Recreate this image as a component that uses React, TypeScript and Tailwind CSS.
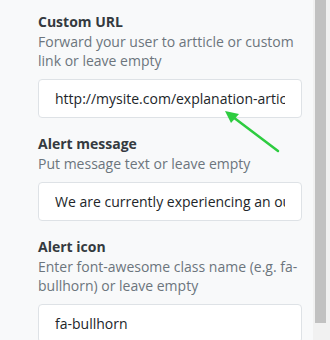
function Field({
  label,
  hint,
  value,
}: {
  label: string;
  hint: string;
  value: string;
}) {
  return (
    <div className="mb-4">
      <div className="text-[14px] leading-[20px] font-bold text-[#343a40]">{label}</div>
      <div className="text-[14px] leading-[19px] text-[#6c757d]">{hint}</div>
      <input
        type="text"
        readOnly
        defaultValue={value}
        className="mt-[9px] block w-[264px] h-[39px] rounded-[4px] border border-[#dee2e6] bg-white px-4 text-[14px] text-[#212529] outline-none"
      />
    </div>
  );
}

export default function App() {
  return (
    <div
      className="relative flex h-[340px] w-[330px] overflow-hidden bg-[#f8f9fa]"
      style={{ fontFamily: '"Open Sans", "Noto Sans", sans-serif' }}
    >
      {/* FORM */}
      <div className="flex-1 pl-[38px] pt-[12px]">
        <Field
          label="Custom URL"
          hint="Forward your user to artticle or custom link or leave empty"
          value="http://mysite.com/explanation-article"
        />
        <Field
          label="Alert message"
          hint="Put message text or leave empty"
          value="We are currently experiencing an outage"
        />
        <Field
          label="Alert icon"
          hint="Enter font-awesome class name (e.g. fa-bullhorn) or leave empty"
          value="fa-bullhorn"
        />
      </div>
      {/* SCROLLBAR */}
      <div className="w-[17px] bg-[#f1f1f1] pl-[2px] pr-[4px]">
        <div className="h-[323px] bg-[#c1c1c1]"></div>
      </div>
      {/* ARROW */}
      <svg
        className="absolute left-0 top-0 pointer-events-none"
        width="330"
        height="340"
        viewBox="0 0 330 340"
      >
        <line x1="278" y1="151" x2="229" y2="114" stroke="#2ecc40" strokeWidth="2.5" strokeLinecap="round" />
        <polygon points="225,111 239,114 231,123" fill="#2ecc40" />
      </svg>
    </div>
  );
}
